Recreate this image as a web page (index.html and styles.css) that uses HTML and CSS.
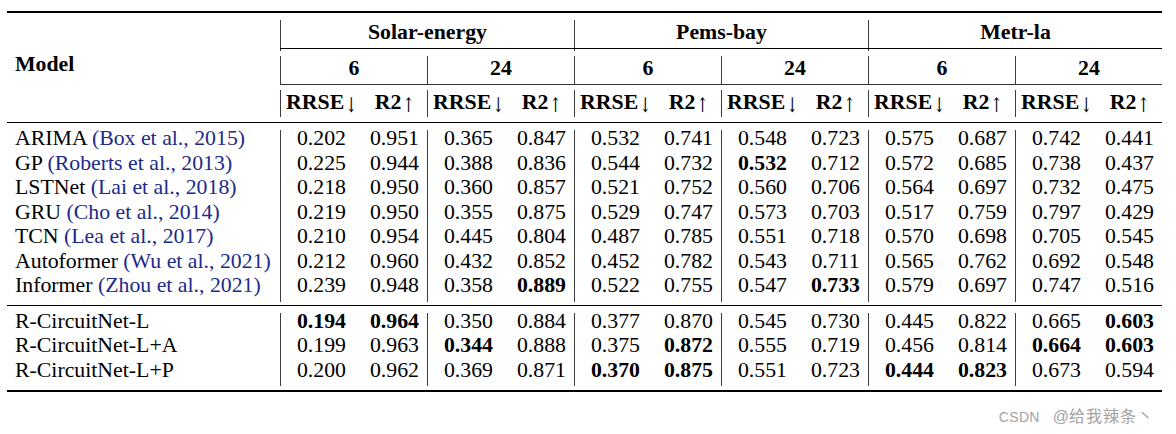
FILE: index.html
```html
<!DOCTYPE html>
<html>
<head>
<meta charset="utf-8">
<link rel="stylesheet" href="styles.css">
</head>
<body>
<div class="page">
  <div class="tbl">
    <div class="rule thick"></div>
    <div class="head">
      <div class="model">Model</div>
      <div class="head-right">
        <div class="hrow r1">
          <div class="hc bar">Solar-energy</div>
          <div class="hc bar">Pems-bay</div>
          <div class="hc bar">Metr-la</div>
        </div>
        <div class="rule hr1"></div>
        <div class="hrow r2">
          <div class="hc bar">6</div><div class="hc bar">24</div>
          <div class="hc bar">6</div><div class="hc bar">24</div>
          <div class="hc bar">6</div><div class="hc bar">24</div>
        </div>
        <div class="rule hr2"></div>
        <div class="hrow r3">
          <div class="hc bar">RRSE<span class="ar">↓</span></div><div class="hc">R2<span class="ar">↑</span></div>
          <div class="hc bar">RRSE<span class="ar">↓</span></div><div class="hc">R2<span class="ar">↑</span></div>
          <div class="hc bar">RRSE<span class="ar">↓</span></div><div class="hc">R2<span class="ar">↑</span></div>
          <div class="hc bar">RRSE<span class="ar">↓</span></div><div class="hc">R2<span class="ar">↑</span></div>
          <div class="hc bar">RRSE<span class="ar">↓</span></div><div class="hc">R2<span class="ar">↑</span></div>
          <div class="hc bar">RRSE<span class="ar">↓</span></div><div class="hc">R2<span class="ar">↑</span></div>
        </div>
      </div>
    </div>
    <div class="rule mid r-a"></div>
    <div class="body">
      <div class="name">ARIMA <span class="cite">(Box et al., 2015)</span></div>
      <div class="c bar">0.202</div><div class="c">0.951</div><div class="c bar">0.365</div><div class="c">0.847</div><div class="c bar">0.532</div><div class="c">0.741</div><div class="c bar">0.548</div><div class="c">0.723</div><div class="c bar">0.575</div><div class="c">0.687</div><div class="c bar">0.742</div><div class="c">0.441</div>

      <div class="name">GP <span class="cite">(Roberts et al., 2013)</span></div>
      <div class="c bar">0.225</div><div class="c">0.944</div><div class="c bar">0.388</div><div class="c">0.836</div><div class="c bar">0.544</div><div class="c">0.732</div><div class="c bar b">0.532</div><div class="c">0.712</div><div class="c bar">0.572</div><div class="c">0.685</div><div class="c bar">0.738</div><div class="c">0.437</div>

      <div class="name">LSTNet <span class="cite">(Lai et al., 2018)</span></div>
      <div class="c bar">0.218</div><div class="c">0.950</div><div class="c bar">0.360</div><div class="c">0.857</div><div class="c bar">0.521</div><div class="c">0.752</div><div class="c bar">0.560</div><div class="c">0.706</div><div class="c bar">0.564</div><div class="c">0.697</div><div class="c bar">0.732</div><div class="c">0.475</div>

      <div class="name">GRU <span class="cite">(Cho et al., 2014)</span></div>
      <div class="c bar">0.219</div><div class="c">0.950</div><div class="c bar">0.355</div><div class="c">0.875</div><div class="c bar">0.529</div><div class="c">0.747</div><div class="c bar">0.573</div><div class="c">0.703</div><div class="c bar">0.517</div><div class="c">0.759</div><div class="c bar">0.797</div><div class="c">0.429</div>

      <div class="name">TCN <span class="cite">(Lea et al., 2017)</span></div>
      <div class="c bar">0.210</div><div class="c">0.954</div><div class="c bar">0.445</div><div class="c">0.804</div><div class="c bar">0.487</div><div class="c">0.785</div><div class="c bar">0.551</div><div class="c">0.718</div><div class="c bar">0.570</div><div class="c">0.698</div><div class="c bar">0.705</div><div class="c">0.545</div>

      <div class="name">Autoformer <span class="cite">(Wu et al., 2021)</span></div>
      <div class="c bar">0.212</div><div class="c">0.960</div><div class="c bar">0.432</div><div class="c">0.852</div><div class="c bar">0.452</div><div class="c">0.782</div><div class="c bar">0.543</div><div class="c">0.711</div><div class="c bar">0.565</div><div class="c">0.762</div><div class="c bar">0.692</div><div class="c">0.548</div>

      <div class="name">Informer <span class="cite">(Zhou et al., 2021)</span></div>
      <div class="c bar">0.239</div><div class="c">0.948</div><div class="c bar">0.358</div><div class="c b">0.889</div><div class="c bar">0.522</div><div class="c">0.755</div><div class="c bar">0.547</div><div class="c b">0.733</div><div class="c bar">0.579</div><div class="c">0.697</div><div class="c bar">0.747</div><div class="c">0.516</div>
    </div>
    <div class="rule mid r-b"></div>
    <div class="body">
      <div class="name">R-CircuitNet-L</div>
      <div class="c bar b">0.194</div><div class="c b">0.964</div><div class="c bar">0.350</div><div class="c">0.884</div><div class="c bar">0.377</div><div class="c">0.870</div><div class="c bar">0.545</div><div class="c">0.730</div><div class="c bar">0.445</div><div class="c">0.822</div><div class="c bar">0.665</div><div class="c b">0.603</div>

      <div class="name">R-CircuitNet-L+A</div>
      <div class="c bar">0.199</div><div class="c">0.963</div><div class="c bar b">0.344</div><div class="c">0.888</div><div class="c bar">0.375</div><div class="c b">0.872</div><div class="c bar">0.555</div><div class="c">0.719</div><div class="c bar">0.456</div><div class="c">0.814</div><div class="c bar b">0.664</div><div class="c b">0.603</div>

      <div class="name">R-CircuitNet-L+P</div>
      <div class="c bar">0.200</div><div class="c">0.962</div><div class="c bar">0.369</div><div class="c">0.871</div><div class="c bar b">0.370</div><div class="c b">0.875</div><div class="c bar">0.551</div><div class="c">0.723</div><div class="c bar b">0.444</div><div class="c b">0.823</div><div class="c bar">0.673</div><div class="c">0.594</div>
    </div>
    <div class="rule thick bottom"></div>
  </div>
  <div class="wm"><span class="lat">CSDN</span><span class="at">@</span><span class="cjk">给我辣条丶</span></div>
</div>
</body>
</html>
```

FILE: styles.css
```css
* { box-sizing: border-box; }
html, body { margin: 0; padding: 0; background: #fff; }
body {
  font-family: "Liberation Serif", "Times New Roman", serif;
  color: #000;
}
.page {
  padding: 11px 0 0 7px;
  width: 1176px;
}
.tbl {
  width: 1155px;
  font-size: 21.8px;
}
.rule {
  height: 1px;
  background: #000;
}
.rule.thick { height: 2px; }
.rule.hr1 { margin: 4px 0 7px; }
.rule.hr2 { margin: 4px 0 5px; background: #333; }
.rule.mid { height: 1.3px; }
.rule.r-a { margin: 5px 0 7px; }
.rule.r-b { margin: 3.2px 0 6.7px; }
.rule.bottom { margin-top: 3.5px; }

.head {
  display: grid;
  grid-template-columns: 273px 882px;
  padding-top: 7px;
}
.model {
  font-weight: bold;
  display: flex;
  align-items: center;
  padding-left: 8px;
  padding-bottom: 8px;
}
.head-right {
  display: flex;
  flex-direction: column;
}
.hrow {
  display: grid;
  font-weight: bold;
}
.hrow.r1 { grid-template-columns: repeat(3, 294px); height: 24px; }
.hrow.r2 { grid-template-columns: repeat(6, 147px); height: 24px; }
.hrow.r3 { grid-template-columns: repeat(6, 82px 65px); height: 27px; }
.hc {
  display: flex;
  align-items: center;
  justify-content: center;
}
.hrow.r1 .hc { padding-bottom: 6px; }
.hrow.r2 .hc { padding-bottom: 4px; }
.hrow.r3 .hc { padding-bottom: 2px; }
.ar {
  display: inline-block;
  font-family: "DejaVu Serif", serif;
  font-weight: normal;
  font-size: 14px;
  line-height: 14px;
  color: #000;
  transform: scaleY(1.45);
  position: relative;
  top: 2px;
  margin-left: 1px;
}
.bar { border-left: 1px solid #3c3c3c; }

.body {
  display: grid;
  grid-template-columns: 273px repeat(6, 82px 65px);
  grid-auto-rows: 24.5px;
  line-height: 17px;
}
.name {
  padding-left: 8px;
  white-space: nowrap;
}
.cite { color: #1c2a8c; }
.c { text-align: center; }
.c.b { font-weight: bold; }

.wm {
  width: 1155px;
  display: flex;
  justify-content: flex-end;
  align-items: baseline;
  margin-top: 12.5px;
  padding-right: 8px;
  line-height: 22px;
  color: #a3a3a3;
  font-family: "Liberation Sans", "Noto Sans CJK SC", sans-serif;
}
.wm .lat { font-size: 14px; letter-spacing: 0.3px; }
.wm .at { font-size: 16px; margin-left: 13px; }
.wm .cjk {
  font-family: "Noto Sans CJK SC", sans-serif;
  font-size: 16px;
  letter-spacing: 1px;
}
```
